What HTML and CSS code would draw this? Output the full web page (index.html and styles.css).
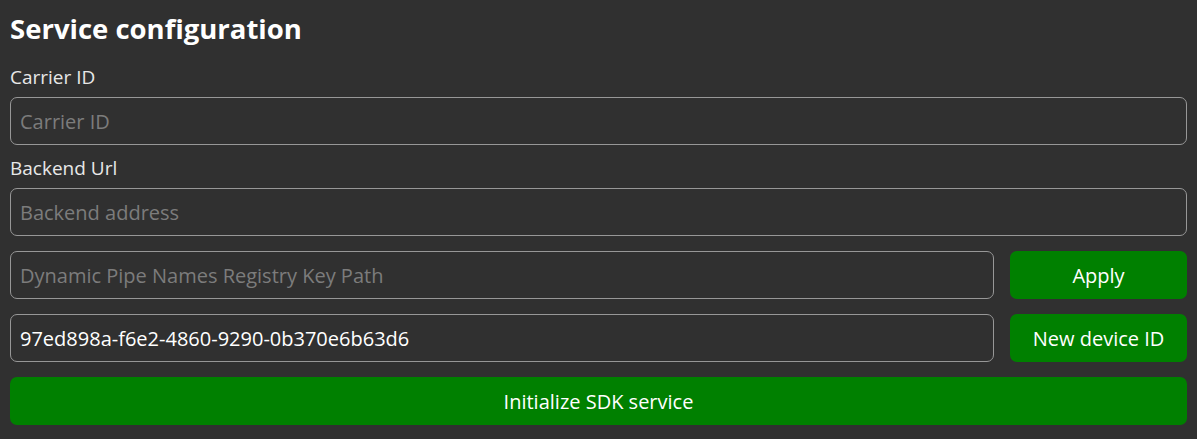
FILE: index.html
```html
<!DOCTYPE html>
<html lang="en">
<head>
    <meta charset="UTF-8">
    <meta name="viewport" content="width=device-width, initial-scale=1.0">
    <title>Service configuration</title>
    <link rel="stylesheet" href="styles.css">
</head>
<body>

    <div class="config">
        <h1 class="title">Service configuration</h1>

        <label class="label" for="carrierId">Carrier ID</label>
        <input type="text" id="carrierId" class="field" placeholder="Carrier ID">

        <label class="label label-gap" for="backendUrl">Backend Url</label>
        <input type="text" id="backendUrl" class="field" placeholder="Backend address">

        <div class="row">
            <input type="text" class="field" placeholder="Dynamic Pipe Names Registry Key Path">
            <button class="btn side-btn">Apply</button>
        </div>

        <div class="row">
            <input type="text" class="field" value="97ed898a-f6e2-4860-9290-0b370e6b63d6">
            <button class="btn side-btn">New device ID</button>
        </div>

        <button class="btn init-btn">Initialize SDK service</button>
    </div>

</body>
</html>
```

FILE: styles.css
```css
body {
    font-family: "Open Sans", "Noto Sans", sans-serif;
    background-color: #303030;
    color: #e8e8e8;
    margin: 0;
    padding: 0;
}
.config {
    display: flex;
    flex-direction: column;
    padding: 11px 10px 10px 10px;
}
.title {
    font-size: 27.5px;
    font-weight: bold;
    line-height: 36px;
    color: #ffffff;
    margin: 0 0 18px 0;
}
.label {
    font-size: 19px;
    line-height: 24px;
    margin-bottom: 8px;
}
.label-gap {
    margin-top: 11px;
}
.field {
    box-sizing: border-box;
    height: 48px;
    width: 100%;
    padding: 0 9px;
    background-color: transparent;
    border: 1.5px solid #979797;
    border-radius: 7px;
    color: #ffffff;
    font-family: inherit;
    font-size: 20px;
    outline: none;
}
.field::placeholder {
    color: #7c7c7c;
}
.row {
    display: flex;
    gap: 16px;
    margin-top: 15px;
}
.row .field {
    flex-grow: 1;
}
.btn {
    height: 48px;
    background-color: #008000;
    color: #ffffff;
    border: none;
    border-radius: 7px;
    font-family: inherit;
    cursor: pointer;
}
.side-btn {
    flex-shrink: 0;
    width: 177px;
    font-size: 20px;
}
.init-btn {
    margin-top: 15px;
    width: 100%;
    font-size: 20px;
}
```
